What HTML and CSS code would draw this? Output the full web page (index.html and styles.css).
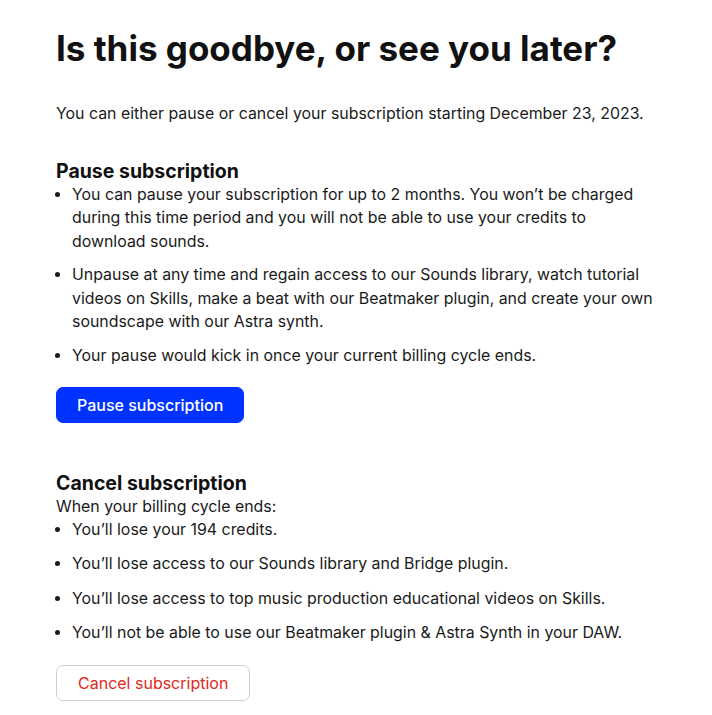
FILE: index.html
```html
<!DOCTYPE html>
<html lang="en">
  <head>
    <meta charset="UTF-8" />
    <meta name="viewport" content="width=device-width, initial-scale=1.0" />
    <title>Cancel subscription</title>
    <link rel="stylesheet" href="styles.css">
  </head>
  <body>
    <div class="wrapper">
      <h1 class="title">Is this goodbye, or see you later?</h1>
      <p class="intro">You can either pause or cancel your subscription starting December 23, 2023.</p>

      <div class="section">
        <h2 class="section-title">Pause subscription</h2>
        <ul class="points">
          <li>You can pause your subscription for up to 2 months. You won’t be charged during this time period and you will not be able to use your credits to download sounds.</li>
          <li>Unpause at any time and regain access to our Sounds library, watch tutorial videos on Skills, make a beat with our Beatmaker plugin, and create your own soundscape with our Astra synth.</li>
          <li>Your pause would kick in once your current billing cycle ends.</li>
        </ul>
        <button class="btn btn-primary">Pause subscription</button>
      </div>

      <div class="section section-cancel">
        <h2 class="section-title">Cancel subscription</h2>
        <p class="note">When your billing cycle ends:</p>
        <ul class="points points-loose">
          <li>You’ll lose your 194 credits.</li>
          <li>You’ll lose access to our Sounds library and Bridge plugin.</li>
          <li>You’ll lose access to top music production educational videos on Skills.</li>
          <li>You’ll not be able to use our Beatmaker plugin &amp; Astra Synth in your DAW.</li>
        </ul>
        <button class="btn btn-outline">Cancel subscription</button>
      </div>
    </div>
  </body>
</html>
```

FILE: styles.css
```css
body {
  margin: 0;
  background: #ffffff;
  color: #1a1a1a;
  font-family: Inter, "Noto Sans", sans-serif;
  font-size: 15.9px;
  line-height: 23.5px;
}

.wrapper {
  padding: 26px 50px 0 56px;
}

.title {
  margin: 0;
  font-size: 35px;
  line-height: 44px;
  font-weight: 700;
  color: #111111;
}

.intro {
  margin: 32px 0 0;
}

.section {
  margin-top: 33px;
}

.section-title {
  margin: 0;
  font-size: 19.5px;
  line-height: 24px;
  font-weight: 700;
  color: #111111;
}

.points {
  margin: 0;
  padding-left: 16px;
}

.points li {
  margin-bottom: 10px;
}

.points-loose {
  margin-top: -1px;
}

.points-loose li {
  margin-bottom: 11px;
}

.note {
  margin: 0;
}

.btn {
  display: block;
  font-family: inherit;
  font-size: 16px;
  font-weight: 500;
  height: 36px;
  padding: 0 20px;
  border-radius: 7px;
  cursor: pointer;
  margin-top: 20px;
}

.btn-primary {
  background: #0033ff;
  color: #ffffff;
  border: 1px solid #0033ff;
}

.btn-outline {
  background: #ffffff;
  color: #e2291b;
  border: 1px solid #cfcfcf;
  font-weight: 400;
  padding: 0 21px;
}

.section-cancel {
  margin-top: 48px;
}
```
